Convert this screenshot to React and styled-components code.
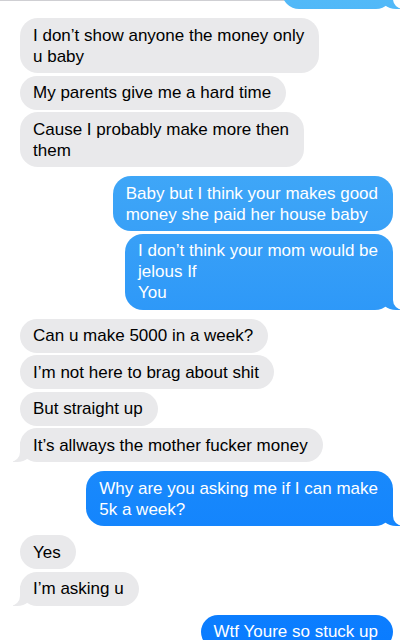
import React from "react";
import styled, { createGlobalStyle, css } from "styled-components";

const messages = [
    { from: "them", text: "I don’t show anyone the money only\nu baby" },
    { from: "them", text: "My parents give me a hard time" },
    { from: "them", text: "Cause I probably make more then\nthem" },
    { from: "me", text: "Baby but I think your makes good\nmoney she paid her house baby" },
    { from: "me", text: "I don’t think your mom would be\njelous If\nYou", tail: true },
    { from: "them", text: "Can u make 5000 in a week?" },
    { from: "them", text: "I’m not here to brag about shit" },
    { from: "them", text: "But straight up" },
    { from: "them", text: "It’s allways the mother fucker money", tail: true },
    { from: "me", text: "Why are you asking me if I can make\n5k a week?", tail: true },
    { from: "them", text: "Yes" },
    { from: "them", text: "I’m asking u", tail: true },
    { from: "me", text: "Wtf Youre so stuck up" },
];

const App = () => {
    return (
        <>
            <GlobalStyle />
            <Thread>
                <Row mine>
                    <CutBubble mine tail />
                </Row>
                {messages.map((m, i) => {
                    const prev = messages[i - 1];
                    const grouped = prev && prev.from === m.from;
                    return (
                        <Row key={i} mine={m.from === "me"} grouped={grouped}>
                            <Bubble mine={m.from === "me"} tail={m.tail}>
                                {m.text}
                            </Bubble>
                        </Row>
                    );
                })}
            </Thread>
        </>
    );
};

export default App;

const GlobalStyle = createGlobalStyle`
    html, body {
        margin: 0;
        background: #ffffff;
        overflow: hidden;
    }
    body {
        font-family: "Liberation Sans", Arial, sans-serif;
        -webkit-font-smoothing: antialiased;
    }
`;

const blueFill = css`
    background: linear-gradient(180deg, #52b9f8 0%, #379ff7 38%, #1b8bfb 70%, #0a7cff 100%) fixed;
`;

const Thread = styled.div`
    width: 414px;
    height: 640px;
    box-sizing: border-box;
    border-top: 1px solid #cfcfd3;
    padding: 0 21px 0 20px;
    display: flex;
    flex-direction: column;
`;

const Row = styled.div.withConfig({ shouldForwardProp: (p) => !["mine", "grouped"].includes(p) })`
    display: flex;
    justify-content: ${(props) => (props.mine ? "flex-end" : "flex-start")};
    margin-top: ${(props) => (props.grouped ? "2.5px" : "9px")};
    &:first-child {
        margin-top: -26px;
    }
`;

const Bubble = styled.div.withConfig({ shouldForwardProp: (p) => !["mine", "tail"].includes(p) })`
    position: relative;
    white-space: pre-line;
    font-size: 17px;
    line-height: 21px;
    padding: 6.5px 15px 6.5px 13px;
    border-radius: 18px;
    color: ${(props) => (props.mine ? "#ffffff" : "#000000")};
    ${(props) => (props.mine ? blueFill : "background: #e9e9eb;")}

    ${(props) =>
        props.tail &&
        css`
            &::before {
                content: "";
                position: absolute;
                bottom: 0;
                height: 20px;
                width: 20px;
                ${props.mine
                    ? css`
                          right: -7px;
                          border-bottom-left-radius: 16px 14px;
                          ${blueFill}
                      `
                    : css`
                          left: -7px;
                          border-bottom-right-radius: 16px 14px;
                          background: #e9e9eb;
                      `}
            }
            &::after {
                content: "";
                position: absolute;
                bottom: 0;
                height: 20px;
                width: 26px;
                background: #ffffff;
                ${props.mine
                    ? css`
                          right: -26px;
                          border-bottom-left-radius: 10px;
                      `
                    : css`
                          left: -26px;
                          border-bottom-right-radius: 10px;
                      `}
            }
        `}
`;

const CutBubble = styled(Bubble)`
    width: 111px;
    height: 34px;
    padding: 0;
    box-sizing: border-box;
`;
